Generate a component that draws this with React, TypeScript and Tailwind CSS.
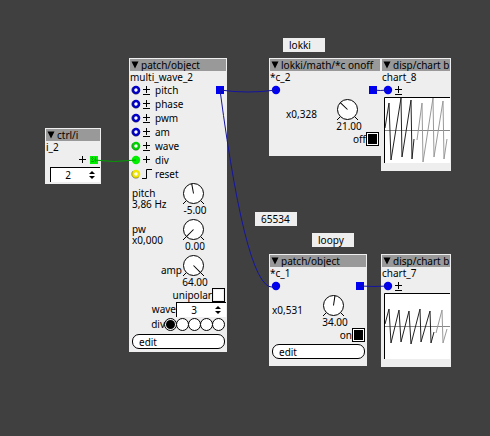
import { useId, useState, type ReactNode } from "react";

type Tone = "blue" | "green" | "yellow";

const TONES: Record<Tone, string> = {
  blue: "#0000c8",
  green: "#00d200",
  yellow: "#f0e600",
};

function PatchNode({
  title,
  name,
  className,
  children,
}: {
  title: string;
  name: string;
  className: string;
  children: ReactNode;
}) {
  return (
    <section className={`absolute bg-[#eeeeee] p-px ${className}`}>
      <header className="flex h-3 items-center gap-0.5 overflow-hidden bg-[#999999] pl-px whitespace-nowrap">
        <button type="button" aria-label="Collapse" className="h-2 w-2 shrink-0">
          <svg viewBox="0 0 8 8" className="block h-2 w-2">
            <path d="M0.5 0.5H7.5L4 7.5Z" fill="#000" />
          </svg>
        </button>
        <h2 className="leading-3">{title}</h2>
      </header>
      <p className="h-3 leading-3">{name}</p>
      {children}
    </section>
  );
}

function Ring({ tone, wired }: { tone: Tone; wired?: boolean }) {
  return (
    <svg viewBox="0 0 10 10" className="block h-2.5 w-2.5 shrink-0">
      {wired ? (
        <circle cx="5" cy="5" r="4.2" fill={tone === "blue" ? "#0000f0" : "#00f000"} />
      ) : (
        <>
          <circle cx="5" cy="5" r="3" fill="#fff" stroke={TONES[tone]} strokeWidth="2.6" />
          <path d="M7.8 8A4.1 4.1 0 0 1 2 2.1" fill="none" stroke="#222" strokeOpacity="0.55" strokeWidth="0.8" />
        </>
      )}
    </svg>
  );
}

function Sign({ kind }: { kind: "bipolar" | "plus" | "edge" }) {
  const d = {
    bipolar: "M1 5.5H8M4.5 2V9M1 10.5H8",
    plus: "M1 5.5H8M4.5 2V9",
    edge: "M0 10.5H4.5V1.5H10",
  }[kind];
  return (
    <svg viewBox="0 0 10 12" className="block h-3 w-2.5 shrink-0">
      <path d={d} fill="none" stroke="#000" strokeWidth="1" />
    </svg>
  );
}

function Inlet({
  tone = "blue",
  wired,
  sign,
  label,
}: {
  tone?: Tone;
  wired?: boolean;
  sign?: "bipolar" | "plus" | "edge";
  label?: string;
}) {
  return (
    <div className="flex h-3.5 items-center gap-px pl-px">
      <Ring tone={tone} wired={wired} />
      {sign && <Sign kind={sign} />}
      {label && <span className="pl-0.5 leading-3">{label}</span>}
    </div>
  );
}

function Outlet({ tone = "blue" }: { tone?: Tone }) {
  return (
    <svg viewBox="0 0 10 10" className="block h-2.5 w-2.5 shrink-0">
      <rect x="1" y="1" width="8" height="8" fill={tone === "blue" ? "#0000f0" : "#00f000"} />
      {tone === "green" && (
        <path d="M3.5 2V8M6.5 2V8M2 3.5H8M2 6.5H8" stroke="#009a00" strokeWidth="1" strokeDasharray="1 1" />
      )}
    </svg>
  );
}

function Knob({ label, min = 0, initial }: { label: string; min?: number; initial: number }) {
  const [value, setValue] = useState(initial);
  const angle = -135 + (270 * (value - min)) / (64 - min);
  return (
    <label className="relative flex w-[26px] shrink-0 flex-col items-center">
      <svg viewBox="0 0 24 22" className="block h-[22px] w-6">
        <path d="M3.5 17.5L0 21M17.5 17.5L21 21" stroke="#000" strokeWidth="1" />
        <circle cx="10.5" cy="10.5" r="10" fill="#fff" stroke="#000" strokeWidth="1" />
        <line x1="10.5" y1="10.5" x2="10.5" y2="0.5" stroke="#000" transform={`rotate(${angle} 10.5 10.5)`} />
      </svg>
      <output className="h-[11px] leading-[11px]">{value.toFixed(2)}</output>
      <input
        type="range"
        aria-label={label}
        min={min}
        max={64}
        value={value}
        onChange={(e) => setValue(Number(e.target.value))}
        className="absolute inset-0 h-full w-full opacity-0"
      />
    </label>
  );
}

function KnobRow({ className, text, knob }: { className: string; text: ReactNode; knob: ReactNode }) {
  return (
    <div className="flex h-[33px] pr-[18px]">
      <div className={`flex-1 leading-[11px] ${className}`}>{text}</div>
      {knob}
    </div>
  );
}

function Toggle({ label, initial }: { label: string; initial: boolean }) {
  const [on, setOn] = useState(initial);
  return (
    <label className="flex h-3.5 items-center justify-end pr-px leading-[11px]">
      {label}
      <input
        type="checkbox"
        checked={on}
        onChange={() => setOn(!on)}
        className="h-3.5 w-[13px] appearance-none border border-black bg-white bg-clip-content p-px checked:bg-black checked:shadow-[inset_0_0_0_1px_#fff]"
      />
    </label>
  );
}

function Spinner({ label, initial, hidden }: { label: string; initial: number; hidden?: boolean }) {
  const [value, setValue] = useState(initial);
  const id = useId();
  return (
    <div className="flex h-[15px] items-center justify-end">
      {!hidden && (
        <label htmlFor={id} className="leading-[11px]">
          {label}
        </label>
      )}
      <div className="flex h-[15px] w-[50px] items-center border-t border-l border-black bg-white">
        <input
          id={id}
          type="text"
          inputMode="numeric"
          aria-label={hidden ? label : undefined}
          value={value}
          onChange={(e) => setValue(Number(e.target.value) || 0)}
          className="h-3 w-[34px] bg-transparent text-center leading-3 outline-none"
        />
        <div className="flex w-3 flex-col items-center gap-0.5 pl-0.5">
          <button type="button" aria-label="Increase" onClick={() => setValue(value + 1)} className="h-[3px] w-1.5">
            <svg viewBox="0 0 6 3" className="block h-[3px] w-1.5">
              <path d="M3 0L6 3H0Z" />
            </svg>
          </button>
          <button type="button" aria-label="Decrease" onClick={() => setValue(value - 1)} className="h-[3px] w-1.5">
            <svg viewBox="0 0 6 3" className="block h-[3px] w-1.5">
              <path d="M3 3L6 0H0Z" />
            </svg>
          </button>
        </div>
      </div>
    </div>
  );
}

function DivSelector() {
  const [selected, setSelected] = useState(0);
  return (
    <fieldset className="flex h-[15px] items-center justify-end pr-px" aria-label="div">
      <span className="leading-[11px]">div</span>
      {[0, 1, 2, 3, 4].map((i) => (
        <input
          key={i}
          type="radio"
          name="div"
          aria-label={`div ${i + 1}`}
          checked={selected === i}
          onChange={() => setSelected(i)}
          className="-ml-px h-[13px] w-[13px] appearance-none rounded-full border border-black bg-white p-px checked:bg-black checked:bg-clip-content"
        />
      ))}
    </fieldset>
  );
}

function EditButton() {
  return (
    <div className="pt-0.5 pr-px pl-0.5">
      <button
        type="button"
        className="block h-[15px] w-full rounded-[7px] border border-black bg-white pl-1.5 text-left leading-3"
      >
        edit
      </button>
    </div>
  );
}

function Chart({ recent, older }: { recent: string; older: string }) {
  return (
    <div className="pb-[7px] pl-0.5">
      <svg viewBox="0 0 66 66" className="block h-[66px] w-full bg-white">
        <path d="M0 33.5H66" stroke="#888" strokeWidth="1" />
        <polyline points={older} fill="none" stroke="#999" strokeWidth="1" />
        <polyline points={recent} fill="none" stroke="#222" strokeWidth="1" />
        <path d="M0.5 66V0.5H66" fill="none" stroke="#000" strokeWidth="1" />
      </svg>
    </div>
  );
}

function Comment({ className, children }: { className: string; children: ReactNode }) {
  return (
    <p className={`absolute h-3.5 w-[42px] bg-[#eeeeee] pl-1.5 leading-[14px] ${className}`}>{children}</p>
  );
}

export default function App() {
  return (
    <main className="relative min-h-screen w-full overflow-hidden bg-[#404040] font-['Noto_Sans',sans-serif] text-[10px] text-black">
      <PatchNode title="ctrl/i" name="i_2" className="top-[128px] left-[45px] w-14 pb-0.5">
        <div className="flex h-3.5 items-center justify-end gap-px pr-px">
          <Sign kind="plus" />
          <Outlet tone="green" />
        </div>
        <Spinner label="i_2" initial={2} hidden />
      </PatchNode>

      <PatchNode title="patch/object" name="multi_wave_2" className="top-[58px] left-[129px] w-[98px] pb-[3px]">
        <div className="flex items-center justify-between pr-px">
          <Inlet sign="bipolar" label="pitch" />
          <Outlet />
        </div>
        <Inlet sign="bipolar" label="phase" />
        <Inlet sign="bipolar" label="pwm" />
        <Inlet sign="bipolar" label="am" />
        <Inlet tone="green" sign="bipolar" label="wave" />
        <Inlet tone="green" wired sign="plus" label="div" />
        <Inlet tone="yellow" sign="edge" label="reset" />
        <div className="flex flex-col gap-[3px] pt-0.5">
          <KnobRow
            className="pt-[5px] pl-0.5"
            text={
              <>
                <p>pitch</p>
                <p>3,86 Hz</p>
              </>
            }
            knob={<Knob label="pitch" min={-64} initial={-5} />}
          />
          <KnobRow
            className="pt-[5px] pl-0.5"
            text={
              <>
                <p>pw</p>
                <p>x0,000</p>
              </>
            }
            knob={<Knob label="pw" initial={0} />}
          />
          <KnobRow className="pt-2.5 text-right" text="amp" knob={<Knob label="amp" initial={64} />} />
        </div>
        <Toggle label="unipolar" initial={false} />
        <Spinner label="wave" initial={3} />
        <DivSelector />
        <EditButton />
      </PatchNode>

      <PatchNode title="lokki/math/*c onoff" name="*c_2" className="top-[58px] left-[269px] w-28 pb-2.5">
        <div className="flex items-center justify-between pr-0.5">
          <Inlet wired />
          <Outlet />
        </div>
        <div className="pt-0.5">
          <KnobRow className="pt-2.5 pl-4" text="x0,328" knob={<Knob label="gain" initial={21} />} />
        </div>
        <Toggle label="off" initial />
      </PatchNode>

      <PatchNode title="disp/chart b" name="chart_8" className="top-[58px] left-[381px] w-[70px]">
        <Inlet wired sign="bipolar" />
        <Chart
          recent="1,31 5,6 7,63 17,1 18,60 27,3 28,62 30,42"
          older="33,43 38,6 39,65 49,1 50,60 59,4 60,62 63,42"
        />
      </PatchNode>

      <PatchNode title="patch/object" name="*c_1" className="top-[254px] left-[269px] w-[98px] pb-[7px]">
        <div className="flex items-center justify-between pr-px">
          <Inlet wired />
          <Outlet />
        </div>
        <div className="pt-0.5">
          <KnobRow className="pt-2.5 pl-0.5" text="x0,531" knob={<Knob label="gain" initial={34} />} />
        </div>
        <Toggle label="on" initial />
        <EditButton />
      </PatchNode>

      <PatchNode title="disp/chart b" name="chart_7" className="top-[254px] left-[381px] w-[70px]">
        <Inlet wired sign="bipolar" />
        <Chart
          recent="1,31 5,16 7,50 15,17 17,49 25,18 27,51 36,16 37,49 46,18 47,50 50,39"
          older="52,40 58,17 59,50 63,36"
        />
      </PatchNode>

      <Comment className="top-[38px] left-[283px]">lokki</Comment>
      <Comment className="top-[212px] left-[255px]">65534</Comment>
      <Comment className="top-[233px] left-[312px]">loopy</Comment>

      <svg viewBox="0 0 490 436" className="pointer-events-none absolute top-0 left-0 h-[436px] w-[490px]">
        <g fill="none" strokeWidth="1">
          <path d="M94 160Q114 163 136 160" stroke="#00a000" />
          <path d="M220 90Q248 94 276 90" stroke="#1414a0" />
          <path d="M220 90Q248 302 276 286" stroke="#1414a0" />
          <path d="M373 90Q380 91 388 90" stroke="#1414a0" />
          <path d="M360 286Q374 287 388 286" stroke="#1414a0" />
        </g>
      </svg>
    </main>
  );
}
